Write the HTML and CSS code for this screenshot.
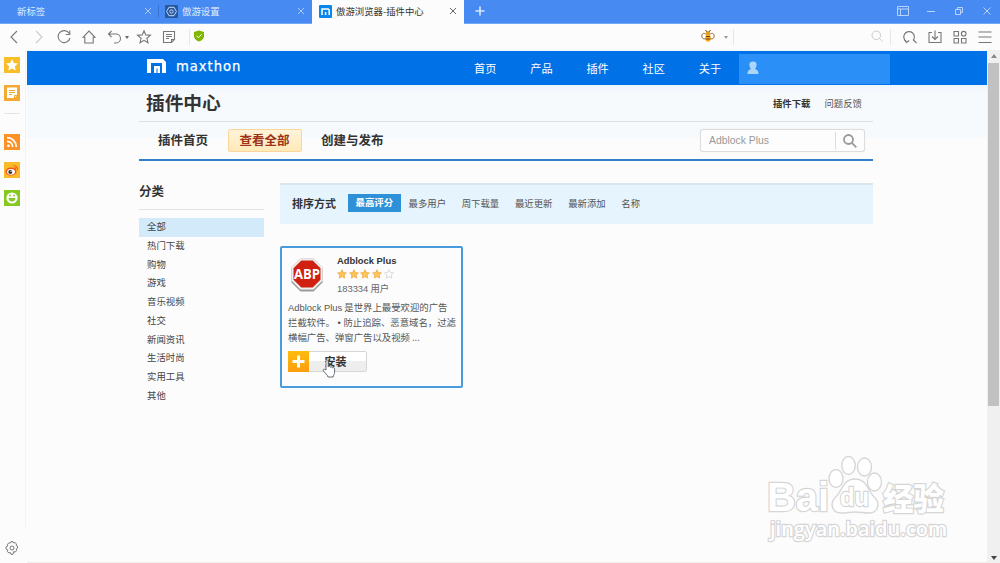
FILE: index.html
```html
<!DOCTYPE html>
<html lang="zh-CN">

<head>
    <meta charset="UTF-8">
    <meta name="viewport" content="width=device-width, initial-scale=1.0">
    <title>傲游浏览器-插件中心</title>
    <link rel="stylesheet" href="styles.css">
</head>

<body>
    <!-- 标签栏 -->
    <div class="tabs">
        <div class="tab first">
            <span class="tab-title">新标签</span>
            <svg class="close" viewBox="0 0 8 8"><path d="M1 1l6 6M7 1l-6 6"/></svg>
        </div>
        <div class="tab second">
            <svg class="tab-icon" viewBox="0 0 13 13"><rect width="13" height="13" rx="1" fill="#27589f"/><path d="M4 2.300h5l2.400 4.200L9 10.700H4L1.600 6.500z" fill="none" stroke="#c5d9f5"/><circle cx="6.500" cy="6.500" r="1.700" fill="none" stroke="#c5d9f5"/></svg>
            <span class="tab-title">傲游设置</span>
            <svg class="close" viewBox="0 0 8 8"><path d="M1 1l6 6M7 1l-6 6"/></svg>
        </div>
        <div class="tab active">
            <svg class="tab-icon" viewBox="0 0 13 13"><rect width="13" height="13" rx="1" fill="#0b86ec"/><path d="M3 10V4h6.200l1 1v5M6.600 10V7" fill="none" stroke="#fff" stroke-width="1.500"/></svg>
            <span class="tab-title">傲游浏览器-插件中心</span>
            <svg class="close" viewBox="0 0 8 8"><path d="M1 1l6 6M7 1l-6 6"/></svg>
        </div>
        <svg class="new-tab" viewBox="0 0 10 10"><path d="M5 .5v9M.5 5h9"/></svg>
        <div class="window-buttons">
            <svg viewBox="0 0 14 14"><path d="M1.500 2.500h11v9h-11zM1.500 5h11M4.500 5v6.500"/></svg>
            <svg viewBox="0 0 14 14"><path d="M3 7.500h8"/></svg>
            <svg viewBox="0 0 14 14"><path d="M3.500 5.500h5v5h-5zM5.500 5.500v-2h5v5h-2"/></svg>
            <svg viewBox="0 0 14 14"><path d="M3.500 3.500l7 7M10.500 3.500l-7 7"/></svg>
        </div>
    </div>

    <!-- 工具栏 -->
    <div class="toolbar">
        <div class="tools">
            <svg viewBox="0 0 16 16"><path d="M11 2L5 8l6 6"/></svg>
            <svg class="disabled" viewBox="0 0 16 16"><path d="M5 2l6 6-6 6"/></svg>
            <svg viewBox="0 0 16 16"><path d="M13.300 4.500A6 6 0 1 0 14 9M13.800 1.500v4h-4"/></svg>
            <svg viewBox="0 0 16 16"><path d="M2 8.300L8 2l6 6.300h-1.800V14H3.800V8.300z"/></svg>
            <svg viewBox="0 0 16 16"><path d="M5.500 2L2.500 5l3 3M2.500 5h7.500a4 4 0 0 1 0 9H8"/></svg>
        </div>
        <i class="caret"></i>
        <div class="tools more">
            <svg viewBox="0 0 16 16"><path d="M8 1.800l1.800 4.100 4.600.4-3.500 3 1.100 4.500L8 11.400l-4 2.400 1.100-4.500-3.500-3 4.600-.4z"/></svg>
            <svg viewBox="0 0 16 16"><path d="M2.500 2.500h11v8l-3 3h-8zM13 10.500h-2.500v3M5 5.500h6M5 7.500h6M5 9.500h3"/></svg>
        </div>
        <i class="divider"></i>
        <svg class="shield" viewBox="0 0 12 12"><path d="M6 .5l5 1.500v4.300c0 2.500-2.400 4.500-5 5.200-2.600-.7-5-2.700-5-5.200V2z" fill="#80b500"/><path d="M3.500 5.800l1.900 1.900 3.300-3.400" fill="none" stroke="#fff"/></svg>
        <svg class="bee" viewBox="0 0 14 14"><path d="M4.500 1l1.500 2M9.500 1L8 3" stroke="#65401b" fill="none"/><path d="M5.800 6C2.500 2.600.2 5.200 1 8s3.800 2.500 4.800-.5M8.200 6C11.500 2.600 13.800 5.200 13 8s-3.800 2.500-4.800-.5" fill="#fff" stroke="#986735"/><circle cx="7" cy="4" r="2" fill="#e99412"/><ellipse cx="7" cy="9" rx="2.700" ry="3.800" fill="#ffab0c"/><path d="M5 7.500h4M4.500 10h5" stroke="#65401b"/></svg>
        <i class="caret light"></i>
        <i class="divider"></i>
        <svg class="search-small" viewBox="0 0 12 12"><circle cx="5.300" cy="5.300" r="4.300"/><path d="M8.400 8.400l3 3"/></svg>
        <i class="divider"></i>
        <div class="tools right">
            <svg viewBox="0 0 16 16"><path d="M4.500 12.500A5.300 5.300 0 1 1 11 11.500M11 10.500l3.500 3.500M2 10.500l2.500 3 2.700-2"/></svg>
            <svg viewBox="0 0 16 16"><path d="M5 3.500H2v10h12v-10h-3M8 1.500v9M5 7.500l3 3 3-3"/></svg>
            <svg viewBox="0 0 16 16"><path d="M2 2.500h4.500V7H2zM2 9.500h4.500V14H2zM9.500 9.500H14V14H9.500z"/><circle cx="11.700" cy="4.700" r="2.300"/></svg>
            <svg viewBox="0 0 16 16"><path d="M1.500 3h13M1.500 8h13M1.500 13.500h13"/></svg>
        </div>
    </div>

    <div class="main">
        <!-- 侧边栏 -->
        <div class="sidebar">
            <svg viewBox="0 0 16 16"><rect width="16" height="16" fill="#f9bd28"/><path d="M8 2l1.800 3.900 4.200.5-3.100 2.900.8 4.200L8 11.400l-3.700 2.100.8-4.200L2 6.400l4.200-.5z" fill="#fff"/></svg>
            <svg viewBox="0 0 16 16"><rect width="16" height="16" fill="#f4aa32"/><path d="M3 2.500h10v8L10.500 13H3z" fill="#fff"/><path d="M5 5.500h6M5 7.500h6M5 9.500h3M13 10.500h-2.500V13" stroke="#f4aa32" fill="none"/></svg>
            <i class="side-line"></i>
            <svg viewBox="0 0 16 16"><rect width="16" height="16" fill="#fb9127"/><circle cx="4.500" cy="11.800" r="1.400" fill="#fff"/><path d="M3 7.300a5.700 5.700 0 0 1 5.700 5.700M3 3.700A9.300 9.300 0 0 1 12.300 13" fill="none" stroke="#fff" stroke-width="1.700"/></svg>
            <svg viewBox="0 0 16 16"><rect width="16" height="16" fill="#fbbb28"/><ellipse cx="7" cy="9.500" rx="5.500" ry="4" fill="#ed5519"/><ellipse cx="7" cy="9.800" rx="4" ry="2.900" fill="#fff"/><circle cx="6.300" cy="10" r="2" fill="#333"/><circle cx="7" cy="9.400" r=".6" fill="#fff"/><path d="M9.500 3.500a4 4 0 0 1 4 4.500M10 5.500a2 2 0 0 1 1.700 2" fill="none" stroke="#ef6418" stroke-width="1.200"/></svg>
            <svg viewBox="0 0 16 16"><rect width="16" height="16" fill="#84c820"/><circle cx="8" cy="8" r="5.600" fill="#fff"/><path d="M4.500 8h7c0 4.700-7 4.700-7 0z" fill="#84c820"/><circle cx="6" cy="5.500" r=".9" fill="#84c820"/><circle cx="10" cy="5.500" r=".9" fill="#84c820"/></svg>
            <svg class="gear" viewBox="0 0 14 14"><path d="M5.300 2L6 .7h2L8.700 2l1.400-.4 1.400 1.300-.4 1.500 1.400.8v2l-1.300.8.400 1.600-1.400 1.500-1.500-.5L8 13.300H6l-.7-1.800-1.500.5-1.400-1.500.4-1.600L1 7.900v-2l1.800-.9-.4-1.600 1.400-1.500z"/><circle cx="7" cy="7" r="2"/></svg>
        </div>

        <div class="page">
            <div class="site-header">
                <svg class="logo-mark" viewBox="0 0 19 14"><path d="M0 0h16l3 3v11h-4V4H4v10H0zM7 7h6v7h-2.500V9.500h-1V14H7z" fill="#fff"/></svg>
                <span class="logo-text">maxthon</span>
                <div class="site-nav">
                    <a>首页</a><a>产品</a><a>插件</a><a>社区</a><a>关于</a>
                </div>
                <div class="user">
                    <svg viewBox="0 0 12 14"><path d="M6 .5c5 0 4 5 2 7.500 2.500.7 3.500 2 3.500 5H.5c0-3 1-4.300 3.500-5C2 5.500 1 .5 6 .5z" fill="#acd5fa"/></svg>
                </div>
            </div>

            <div class="wrap">
                <div class="title-row">
                    <h1>插件中心</h1>
                    <a class="download">插件下载</a>
                    <a class="feedback">问题反馈</a>
                </div>
                <div class="menu">
                    <a>插件首页</a>
                    <a class="current">查看全部</a>
                    <a>创建与发布</a>
                    <div class="search">
                        <span>Adblock Plus</span>
                        <svg viewBox="0 0 14 14"><circle cx="5.500" cy="5.500" r="4.500"/><path d="M8.800 8.800l4.500 4.500"/></svg>
                    </div>
                </div>

                <div class="content">
                    <div class="category">
                        <h2>分类</h2>
                        <ul>
                            <li class="selected">全部</li>
                            <li>热门下载</li>
                            <li>购物</li>
                            <li>游戏</li>
                            <li>音乐视频</li>
                            <li>社交</li>
                            <li>新闻资讯</li>
                            <li>生活时尚</li>
                            <li>实用工具</li>
                            <li>其他</li>
                        </ul>
                    </div>
                    <div class="list">
                        <div class="sort">
                            <b>排序方式</b>
                            <a class="on">最高评分</a>
                            <a>最多用户</a>
                            <a>周下载量</a>
                            <a>最近更新</a>
                            <a>最新添加</a>
                            <a>名称</a>
                        </div>
                        <div class="card">
                            <div class="card-top">
                                <svg class="abp" viewBox="0 0 34 34">
                                    <path d="M10.500 2.500h13l9 9v13l-9 9h-13l-9-9v-13z" fill="#999"/>
                                    <path d="M10.500 .5h13l9 9v13l-9 9h-13l-9-9v-13z" fill="#eee" stroke="#ccc" stroke-width=".6"/>
                                    <path d="M11.300 2.500h11.400l7.800 7.800v11.400l-7.800 7.800H11.300l-7.800-7.800V10.300z" fill="#d0200f"/>
                                    <text x="17" y="21" text-anchor="middle" textLength="26" lengthAdjust="spacingAndGlyphs">ABP</text>
                                </svg>
                                <div class="info">
                                    <h3>Adblock Plus</h3>
                                    <div class="stars">
                                        <svg viewBox="0 0 10 10"><path d="M5 .7l1.300 2.800 3.100.4-2.300 2.100.6 3.100L5 7.600 2.300 9.100l.6-3.100L.6 3.900l3.100-.4z"/></svg>
                                        <svg viewBox="0 0 10 10"><path d="M5 .7l1.300 2.800 3.100.4-2.300 2.100.6 3.100L5 7.600 2.300 9.100l.6-3.100L.6 3.900l3.100-.4z"/></svg>
                                        <svg viewBox="0 0 10 10"><path d="M5 .7l1.300 2.800 3.100.4-2.300 2.100.6 3.100L5 7.600 2.300 9.100l.6-3.100L.6 3.900l3.100-.4z"/></svg>
                                        <svg viewBox="0 0 10 10"><path d="M5 .7l1.300 2.800 3.100.4-2.300 2.100.6 3.100L5 7.600 2.300 9.100l.6-3.100L.6 3.900l3.100-.4z"/></svg>
                                        <svg class="empty" viewBox="0 0 10 10"><path d="M5 .7l1.300 2.800 3.100.4-2.300 2.100.6 3.100L5 7.600 2.300 9.100l.6-3.100L.6 3.900l3.100-.4z"/></svg>
                                    </div>
                                    <div class="users"><span>183334</span> 用户</div>
                                </div>
                            </div>
                            <p><span>Adblock Plus</span> 是世界上最受欢迎的广告<br>拦截软件。<span> • </span>防止追踪、恶意域名，过滤<br>横幅广告、弹窗广告以及视频 ...</p>
                            <div class="install">
                                <svg class="plus" viewBox="0 0 21 21"><path d="M10.500 4.500v12M4.500 10.500h12"/></svg>
                                <b>安装</b>
                                <svg class="cursor" viewBox="0 0 14 19"><path d="M4 11V2.500c0-2 2.200-2 2.200 0V8c.5-1 2-.8 2.200.3.700-.7 2-.4 2.200.6.900-.5 2 0 2 1v3.500c0 1.600-1.200 2.600-1.500 4.600H6c-.5-2-2.500-3.500-4.500-6-1-1.400.5-2.500 2.500-1z" fill="#fff" stroke="#555c68" stroke-width=".9"/></svg>
                            </div>
                        </div>
                    </div>
                </div>
            </div>
        </div>

        <!-- 滚动条 -->
        <div class="scrollbar">
            <i class="arrow up"></i>
            <div class="thumb"></div>
            <i class="arrow down"></i>
        </div>
    </div>

    <!-- 水印 -->
    <svg class="watermark" viewBox="0 0 190 90">
        <g class="outline">
            <ellipse cx="89" cy="27.500" rx="7" ry="9"/>
            <ellipse cx="101.500" cy="14.500" rx="6.700" ry="9"/>
            <ellipse cx="117.500" cy="16" rx="7" ry="9"/>
            <ellipse cx="127.500" cy="31" rx="7" ry="9"/>
            <path d="M108 28c-12 0-13 12-19 18-7 6-4 16 5 16 6 0 9-1 14-1s9 1 14 1c9 0 12-10 5-16-6-6-7-18-19-18z"/>
            <text x="20" y="60" class="bai" textLength="62" lengthAdjust="spacingAndGlyphs">Bai</text>
            <text x="93" y="55" class="du" textLength="29" lengthAdjust="spacingAndGlyphs">du</text>
            <text x="136" y="58.500" class="exp" textLength="61" lengthAdjust="spacingAndGlyphs">经验</text>
            <text x="23" y="85" class="url" textLength="177" lengthAdjust="spacingAndGlyphs">jingyan.baidu.com</text>
        </g>
    </svg>
</body>

</html>
```
FILE: styles.css
```css
* {
    box-sizing: border-box;
}

body {
    margin: 0;
    height: 563px;
    overflow: hidden;
    display: flex;
    flex-direction: column;
    background: #fcfcfc;
    color: #333;
    font-family: "Noto Sans CJK SC", sans-serif;
    font-size: 9.4px;
}

svg {
    display: block;
    flex: none;
    overflow: visible;
}

h1, h2, h3, p, ul {
    margin: 0;
    padding: 0;
}

/* tabs */
.tabs {
    height: 24px;
    flex: none;
    display: flex;
    align-items: center;
    background: #478bf2;
    border-bottom: 1px solid #72a7f5;
    color: #e0ecff;
}

.tab {
    height: 24px;
    display: flex;
    align-items: center;
}

.tab.first {
    width: 158px;
    padding: 0 6px 0 17px;
}

.tab.second {
    width: 154px;
    padding: 0 7px 0 7px;
    background: linear-gradient(#3974cf, #3974cf) 0 5px / 1px 12px no-repeat;
}

.tab.active {
    width: 152px;
    padding: 0 7px;
    background: #fcfcfc;
    color: #333;
}

.tab-icon {
    width: 13px;
    height: 13px;
    margin-right: 4px;
}

.tab-title {
    flex: 1;
    padding-bottom: 1px;
    white-space: nowrap;
}

.close {
    width: 8px;
    height: 8px;
    margin-bottom: 1px;
    fill: none;
    stroke: #a9cbfb;
    stroke-width: 1;
}

.active .close {
    stroke: #666;
}

.new-tab {
    width: 10px;
    height: 10px;
    margin: 0 0 2px 11px;
    stroke: #d8e8ff;
    stroke-width: 1.6;
}

.window-buttons {
    margin-left: auto;
    padding: 0 6px 2px 0;
    display: flex;
    gap: 14px;
}

.window-buttons svg {
    width: 14px;
    height: 14px;
    fill: none;
    stroke: #b8d4fc;
    stroke-width: 1;
}

/* toolbar */
.toolbar {
    height: 26px;
    flex: none;
    display: flex;
    align-items: center;
    padding-left: 6px;
    background: #fcfcfc;
}

.tools {
    display: flex;
    gap: 9px;
}

.tools svg {
    width: 16px;
    height: 16px;
    fill: none;
    stroke: #777;
    stroke-width: 1.1;
}

.tools .disabled {
    stroke: #ccc;
}

.tools.more {
    margin-left: 7px;
}

.tools.right {
    margin: 0 7px 0 11px;
}

.caret {
    margin-left: 3px;
    border: 2.5px solid transparent;
    border-top: 3.5px solid #666;
    border-bottom: 0;
}

.caret.light {
    margin-left: 9px;
    margin-right: 5px;
    border-top-color: #999;
}

.divider {
    width: 1px;
    height: 16px;
    background: #e6e6e6;
}

.more + .divider {
    margin-left: 12px;
}

.shield {
    width: 12px;
    height: 12px;
    margin: 0 0 2px 3px;
}

.bee {
    width: 14px;
    height: 14px;
    margin: 0 0 2px auto;
}

.search-small {
    width: 12px;
    height: 12px;
    margin: 0 7px 2px 137px;
    fill: none;
    stroke: #ccc;
}

/* main */
.main {
    flex: 1;
    display: flex;
    min-height: 0;
}

.sidebar {
    width: 27px;
    padding: 7px 0 7px 4px;
    display: flex;
    flex-direction: column;
    background: linear-gradient(#f3f3f3, #f3f3f3) 25px 0 / 1px 479px no-repeat;
}

.sidebar svg {
    width: 16px;
    height: 16px;
    margin-bottom: 12px;
}

.side-line {
    width: 16px;
    height: 1px;
    margin-bottom: 20px;
    background: #e4e4e4;
}

.sidebar .gear {
    width: 14px;
    height: 14px;
    margin: auto 0 1px 1px;
    fill: none;
    stroke: #777;
}

.page {
    flex: 1;
    padding-top: 1px;
    border-bottom: 1px solid #f0efee;
    background: linear-gradient(#eef6fe 35px, #f6fafd 43px, #f6fafd 88px, #fcfcfc 88px);
}

.site-header {
    height: 34px;
    padding-left: 120px;
    display: flex;
    align-items: center;
    background: #0071e6;
    color: #fff;
}

.logo-mark {
    width: 19px;
    height: 14px;
    margin-bottom: 4px;
}

.logo-text {
    margin: 0 0 3px 10px;
    width: 66px;
    font-family: "DejaVu Sans", sans-serif;
    font-size: 13.2px;
    letter-spacing: .95px;
    -webkit-text-stroke: .25px #fff;
}

.site-nav {
    width: 265px;
    margin-left: 232px;
    display: flex;
    gap: 33.8px;
    font-size: 11.2px;
}

.user {
    width: 151px;
    height: 30px;
    margin-top: 2px;
    padding: 7px 8px;
    background: #2a8ff7;
}

.user svg {
    width: 12px;
    height: 14px;
}

.wrap {
    width: 734px;
    margin-left: 112px;
}

.title-row {
    height: 37px;
    padding: 0 11px 0 7px;
    display: flex;
    align-items: center;
    border-bottom: 1px solid #dde0e0;
}

h1 {
    flex: 1;
    padding-bottom: 4px;
    font-size: 18.7px;
}

.download {
    font-weight: bold;
    margin-right: 14px;
}

.feedback {
    color: #555;
}

.menu {
    height: 39px;
    padding: 0 8px;
    display: flex;
    align-items: center;
    border-bottom: 2px solid #347dc8;
    font-size: 12.5px;
    font-weight: bold;
}

.menu a {
    height: 23px;
    padding: 0 11px;
    margin-right: 8.5px;
    line-height: 22px;
}

.menu .current {
    padding: 0 11px;
    border: 1px solid #fbd59a;
    border-radius: 2px;
    background: linear-gradient(#fff4da, #ffeab8);
    color: #9e3216;
    line-height: 20px;
}

.search {
    width: 165px;
    height: 23px;
    margin-left: auto;
    display: flex;
    align-items: center;
    border: 1px solid #ddd;
    border-radius: 3px;
    background: #fdfdfd;
    box-shadow: 0 0 1px #ddd;
    color: #999;
    font: 10.4px "Liberation Sans", sans-serif;
}

.search span {
    width: 135px;
    padding-left: 8px;
    line-height: 18px;
    border-right: 1px solid #ddd;
}

.search svg {
    width: 14px;
    height: 14px;
    margin-left: 7px;
    fill: none;
    stroke: #999;
    stroke-width: 1.8;
}

.content {
    display: flex;
    padding-top: 22px;
}

.category {
    width: 125px;
    margin-right: 16px;
}

h2 {
    height: 27px;
    border-bottom: 1.5px solid #e4e4e4;
    font-size: 12.5px;
    line-height: 15px;
}

.category ul {
    margin-top: 8px;
    list-style: none;
}

.category li {
    height: 18.75px;
    padding-left: 8px;
    line-height: 16.5px;
    color: #444;
}

.category .selected {
    background: #d3eafb;
}

.list {
    flex: 1;
}

.sort {
    height: 41px;
    padding: 0 0 3px 12px;
    display: flex;
    align-items: center;
    background: #e6f4fd;
    border-top: 2px solid #dbe6ec;
    color: #555;
}

.sort b {
    margin-right: 12px;
    color: #333;
    font-size: 11px;
}

.sort a {
    margin-right: 15.7px;
}

.sort .on {
    height: 18px;
    padding: 0 7.5px;
    margin-right: 8px;
    background: #2e91d8;
    color: #fff;
    font-weight: bold;
    line-height: 16px;
}

.card {
    width: 183px;
    height: 142px;
    margin-top: 22px;
    padding: 7px 6px 0 6px;
    border: 2px solid #489cde;
    border-radius: 2px;
}

.card-top {
    display: flex;
    height: 45px;
}

.abp {
    width: 34px;
    height: 34px;
    margin: 3px 13px 0 2px;
}

.abp text {
    fill: #fff;
    font: bold 14px "Open Sans", sans-serif;
}

h3 {
    font: bold 9.4px/12px "Liberation Sans", sans-serif;
}

.stars {
    display: flex;
    gap: 1.7px;
    margin: 2px 0 3px;
}

.stars svg {
    width: 10px;
    height: 10px;
    fill: #ffc653;
    stroke: #e9a13a;
    stroke-width: .7;
}

.stars .empty {
    fill: #fcfcfc;
    stroke: #ccc;
}

.users {
    color: #666;
    line-height: 13px;
}

.users span, .card p span {
    font-family: "Liberation Sans", sans-serif;
}

.card p {
    color: #555;
    line-height: 14px;
    white-space: nowrap;
}

.install {
    position: relative;
    width: 79px;
    height: 21px;
    margin-top: 7px;
    display: flex;
    border: 1px solid #d6d6d6;
    border-radius: 2px;
    background: linear-gradient(#fff 50%, #eee 50%);
}

.plus {
    width: 21px;
    height: 21px;
    margin: -1px 0 0 -1px;
    background: linear-gradient(#ffbc0c, #fb9e10);
    stroke: #fff;
    stroke-width: 3;
}

.install b {
    flex: 1;
    padding-right: 4px;
    text-align: center;
    font-size: 11px;
    line-height: 19px;
}

.cursor {
    position: absolute;
    left: 33px;
    top: 7px;
    width: 14px;
    height: 19px;
}

/* scrollbar */
.scrollbar {
    width: 13px;
    padding: 4px 1px 3px;
    display: flex;
    flex-direction: column;
    align-items: center;
    background: #f0f0f0;
}

.thumb {
    width: 11px;
    height: 343px;
    margin: 5px 0 auto;
    background: #c1c1c1;
}

.arrow {
    border: 3px solid transparent;
}

.arrow.up {
    border-top: 0;
    border-bottom: 4px solid #888;
}

.arrow.down {
    border-bottom: 0;
    border-top: 4px solid #444;
}

/* watermark */
.watermark {
    position: absolute;
    left: 747px;
    top: 451px;
    width: 190px;
    height: 90px;
}

.outline {
    fill: #fff;
    stroke: #d6d6d6;
    stroke-width: 1.4;
}

.outline text {
    paint-order: stroke;
    stroke-width: 2.4;
}

.bai {
    font: bold 40px "Liberation Sans", sans-serif;
}

.du {
    font: bold 25px "Liberation Sans", sans-serif;
}

.exp {
    font: 900 31px "Noto Sans CJK SC", sans-serif;
}

.url {
    font: 600 20px "Open Sans", sans-serif;
}
```
